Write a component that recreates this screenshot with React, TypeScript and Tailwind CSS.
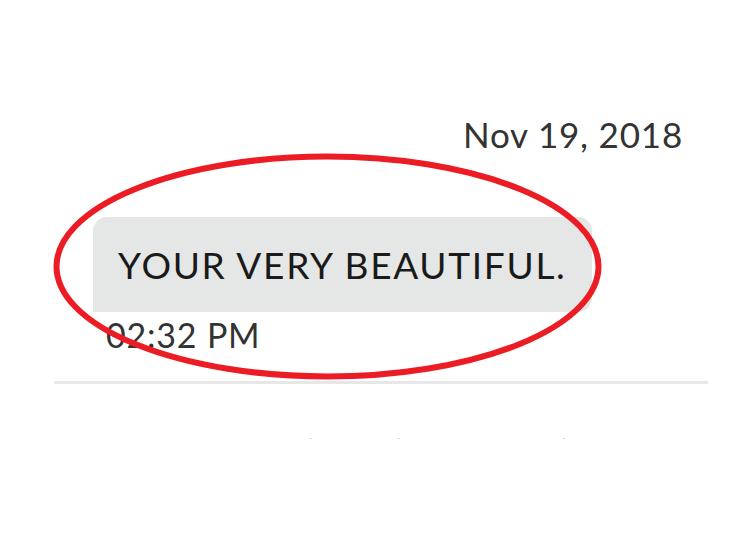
const App = () => {
  return (
    <div className="relative w-[740px] h-[560px] bg-white overflow-hidden font-['Lato',sans-serif]">
      <div className="ml-[54px] w-[654px] pt-[112px]">
        {/* Date */}
        <div className="flex justify-end pr-[25px]">
          <span className="text-[35px] leading-[44px] text-[#333333] tracking-[0.8px]">
            Nov 19, 2018
          </span>
        </div>

        {/* Message */}
        <div className="mt-[61px] ml-[39px] w-[499px] h-[95px] flex items-center rounded-t-[14px] rounded-br-[14px] bg-[#e5e7e6] pl-[25px]">
          <span className="text-[37px] leading-none text-[#1a1a1a] tracking-[1.7px]">
            YOUR VERY BEAUTIFUL.
          </span>
        </div>
        <div className="ml-[52px] mt-[3px] text-[34px] leading-[40px] text-[#333333] tracking-[0.8px]">
          02:32 PM
        </div>

        <div className="mt-[26px] h-[3px] bg-[#e7e7e7]" />

        {/* clipped next row */}
        <div className="flex items-start pt-[54px] pl-[256px] h-[60px]">
          <div className="w-[2px] h-[1px] bg-[#d8d8d8]" />
          <div className="ml-[86px] w-[2px] h-[1px] bg-[#d8d8d8]" />
          <div className="ml-[163px] w-[2px] h-[1px] bg-[#d8d8d8]" />
        </div>
      </div>

      {/* Annotation ring */}
      <svg
        className="absolute left-0 top-0 pointer-events-none"
        width="740"
        height="560"
        viewBox="0 0 740 560"
      >
        <ellipse
          cx="327.5"
          cy="266.5"
          rx="271"
          ry="110"
          fill="none"
          stroke="#ec1c24"
          strokeWidth="6"
        />
      </svg>
    </div>
  );
};

export default App;
